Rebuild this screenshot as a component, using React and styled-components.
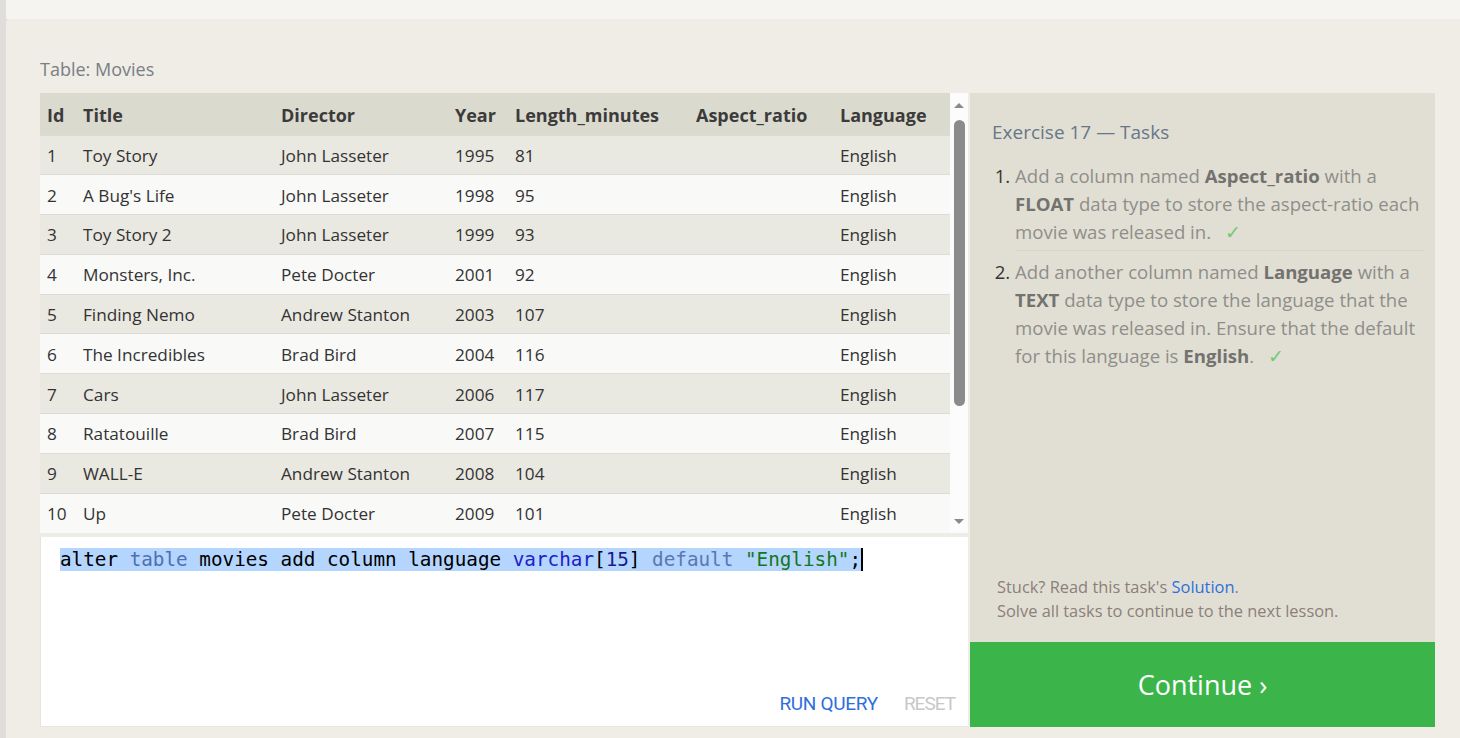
import React from "react";
import styled, { createGlobalStyle } from "styled-components";

const Global = createGlobalStyle`
  html, body { margin: 0; padding: 0; }
  body {
    background: #e0dedb;
    font-family: "Open Sans", "Noto Sans", sans-serif;
    overflow: hidden;
  }
  * { box-sizing: border-box; }
`;

const Page = styled.div`
  display: flex;
  height: 738px;
  padding-left: 6px;
`;

const Main = styled.div`
  flex: 1;
  display: flex;
  flex-direction: column;
  min-width: 0;
`;

const TopBand = styled.div`
  height: 19px;
  background: #f5f4f0;
`;

const Lesson = styled.div`
  flex: 1;
  background: #efede6;
  border-top-left-radius: 4px;
  padding: 38px 25px 0 34px;
`;

const Label = styled.div`
  font-size: 18px;
  line-height: 24px;
  color: #7a7e85;
  margin-bottom: 12px;
`;

const Workspace = styled.div`
  display: grid;
  grid-template-columns: 928px 465px;
  column-gap: 2px;
`;

const LeftCol = styled.div`
  display: flex;
  flex-direction: column;
`;

const TableBox = styled.div`
  display: flex;
  height: 440px;
  border-bottom: 4px solid #eeece6;
  box-sizing: content-box;
`;

const TableClip = styled.div`
  width: 910px;
  overflow: hidden;
`;

const Table = styled.table`
  border-collapse: collapse;
  table-layout: fixed;
  width: 910px;
  font-size: 17.2px;
  color: #333333;
`;

const HeadCell = styled.th`
  background: #dbdacf;
  height: 42px;
  padding: 2px 0 0 7px;
  text-align: left;
  font-weight: 700;
  font-size: 18px;
  color: #3b3b3b;
  white-space: nowrap;
`;

const Row = styled.tr`
  background: ${(p) => (p.$odd ? "#e9e8e1" : "#f9f9f8")};
  border-top: 1px solid #dcdcd5;
`;

const Cell = styled.td`
  height: 39.8px;
  padding: 1px 0 0 7px;
  white-space: nowrap;
`;

const Scrollbar = styled.div`
  width: 18px;
  background: #fcfcfc;
  display: flex;
  flex-direction: column;
  align-items: center;
  padding-top: 10px;
`;

const Arrow = styled.div`
  width: 0;
  height: 0;
  border-left: 5px solid transparent;
  border-right: 5px solid transparent;
  ${(p) =>
    p.$down
      ? "border-top: 5px solid #8a8a8a;"
      : "border-bottom: 5px solid #8a8a8a;"}
`;

const Thumb = styled.div`
  width: 11px;
  height: 286px;
  margin-top: 12px;
  border-radius: 6px;
  background: #8b8b8b;
`;

const Spacer = styled.div`
  flex: 1;
`;

const ArrowBottom = styled.div`
  padding-bottom: 9px;
`;

const Editor = styled.div`
  height: 190px;
  background: #ffffff;
  border-left: 1px solid #e6e4dc;
  border-bottom: 1px solid #e6e4dc;
  display: flex;
  flex-direction: column;
  padding: 11px 13px 11px 19px;
`;

const CodeLine = styled.div`
  font-family: "DejaVu Sans Mono", "Liberation Mono", monospace;
  font-size: 19.3px;
  line-height: 23px;
  color: #000;
  white-space: pre;
  display: flex;
`;

const Selected = styled.span`
  background: #b4d5fe;
`;

const Tok = styled.span`
  color: ${(p) => p.$c};
`;

const Caret = styled.span`
  display: inline-block;
  width: 2px;
  height: 23px;
  background: #000;
`;

const EditorActions = styled.div`
  margin-top: auto;
  display: flex;
  justify-content: flex-end;
  gap: 26px;
`;

const ActionButton = styled.span`
  font-family: "Roboto", "Liberation Sans", sans-serif;
  font-size: 19px;
  letter-spacing: ${(p) => (p.$disabled ? "-1px" : "-0.3px")};
  line-height: 22px;
  color: ${(p) => (p.$disabled ? "#c8c8c8" : "#2f6fdc")};
`;

const RightCol = styled.div`
  display: flex;
  flex-direction: column;
`;

const Tasks = styled.div`
  flex: 1;
  background: #e1dfd4;
  padding: 26px 10px 19px 22px;
  display: flex;
  flex-direction: column;
`;

const TasksTitle = styled.div`
  font-size: 19px;
  line-height: 26px;
  color: #687687;
  margin-bottom: 17px;
`;

const TaskList = styled.ol`
  margin: 0;
  padding: 0 0 0 23px;
`;

const TaskItem = styled.li`
  font-size: 18.6px;
  line-height: 28px;
  color: #8f8e8a;
  padding: ${(p) => (p.$first ? "0 0 4px" : "7px 0 4px")};
  border-top: ${(p) => (p.$first ? "none" : "1px solid #d7d5ca")};
  &::marker {
    color: #333;
  }
`;

const Strong = styled.b`
  font-weight: 700;
  color: #73726f;
`;

const Check = styled.span`
  color: #74c874;
  margin-left: 14px;
`;

const Footer = styled.div`
  margin-top: auto;
  padding-left: 5px;
  font-size: 16.4px;
  line-height: 24px;
  color: #8b8079;
`;

const Link = styled.a`
  color: #2f6fdc;
  text-decoration: none;
`;

const Continue = styled.div`
  height: 85px;
  background: #3bb54a;
  color: #ffffff;
  display: flex;
  align-items: center;
  justify-content: center;
  font-size: 27px;
  font-weight: 400;
`;

const columns = [
  { key: "id", label: "Id", w: 36 },
  { key: "title", label: "Title", w: 198 },
  { key: "director", label: "Director", w: 174 },
  { key: "year", label: "Year", w: 60 },
  { key: "len", label: "Length_minutes", w: 181 },
  { key: "aspect", label: "Aspect_ratio", w: 144 },
  { key: "lang", label: "Language", w: 117 },
];

const movies = [
  [1, "Toy Story", "John Lasseter", 1995, 81],
  [2, "A Bug's Life", "John Lasseter", 1998, 95],
  [3, "Toy Story 2", "John Lasseter", 1999, 93],
  [4, "Monsters, Inc.", "Pete Docter", 2001, 92],
  [5, "Finding Nemo", "Andrew Stanton", 2003, 107],
  [6, "The Incredibles", "Brad Bird", 2004, 116],
  [7, "Cars", "John Lasseter", 2006, 117],
  [8, "Ratatouille", "Brad Bird", 2007, 115],
  [9, "WALL-E", "Andrew Stanton", 2008, 104],
  [10, "Up", "Pete Docter", 2009, 101],
];

export default function App() {
  return (
    <>
      <Global />
      <Page>
        <Main>
          <TopBand />
          <Lesson>
            <Label>Table: Movies</Label>
            <Workspace>
              <LeftCol>
                <TableBox>
                  <TableClip>
                    <Table>
                      <colgroup>
                        {columns.map((c) => (
                          <col key={c.key} style={{ width: c.w }} />
                        ))}
                      </colgroup>
                      <thead>
                        <tr>
                          {columns.map((c) => (
                            <HeadCell key={c.key}>{c.label}</HeadCell>
                          ))}
                        </tr>
                      </thead>
                      <tbody>
                        {movies.map((m, i) => (
                          <Row key={m[0]} $odd={i % 2 === 0}>
                            <Cell>{m[0]}</Cell>
                            <Cell>{m[1]}</Cell>
                            <Cell>{m[2]}</Cell>
                            <Cell>{m[3]}</Cell>
                            <Cell>{m[4]}</Cell>
                            <Cell></Cell>
                            <Cell>English</Cell>
                          </Row>
                        ))}
                      </tbody>
                    </Table>
                  </TableClip>
                  <Scrollbar>
                    <Arrow />
                    <Thumb />
                    <Spacer />
                    <ArrowBottom>
                      <Arrow $down />
                    </ArrowBottom>
                  </Scrollbar>
                </TableBox>
                <Editor>
                  <CodeLine>
                    <Selected>
                      <Tok $c="#000">alter </Tok>
                      <Tok $c="#4f6fb5">table</Tok>
                      <Tok $c="#000"> movies add column language </Tok>
                      <Tok $c="#2020c8">varchar</Tok>
                      <Tok $c="#000">[</Tok>
                      <Tok $c="#1a1a8a">15</Tok>
                      <Tok $c="#000">] </Tok>
                      <Tok $c="#5a77b0">default</Tok>
                      <Tok $c="#000"> </Tok>
                      <Tok $c="#16771a">"English"</Tok>
                      <Tok $c="#000">;</Tok>
                    </Selected>
                    <Caret />
                  </CodeLine>
                  <EditorActions>
                    <ActionButton>RUN QUERY</ActionButton>
                    <ActionButton $disabled>RESET</ActionButton>
                  </EditorActions>
                </Editor>
              </LeftCol>
              <RightCol>
                <Tasks>
                  <TasksTitle>Exercise 17 — Tasks</TasksTitle>
                  <TaskList>
                    <TaskItem $first>
                      Add a column named <Strong>Aspect_ratio</Strong> with a{" "}
                      <Strong>FLOAT</Strong> data type to store the aspect-ratio
                      each movie was released in.<Check>✓</Check>
                    </TaskItem>
                    <TaskItem>
                      Add another column named <Strong>Language</Strong> with a{" "}
                      <Strong>TEXT</Strong> data type to store the language that
                      the movie was released in. Ensure that the default for this
                      language is <Strong>English</Strong>.<Check>✓</Check>
                    </TaskItem>
                  </TaskList>
                  <Footer>
                    Stuck? Read this task's <Link href="#">Solution</Link>.
                    <br />
                    Solve all tasks to continue to the next lesson.
                  </Footer>
                </Tasks>
                <Continue>Continue ›</Continue>
              </RightCol>
            </Workspace>
          </Lesson>
        </Main>
      </Page>
    </>
  );
}
